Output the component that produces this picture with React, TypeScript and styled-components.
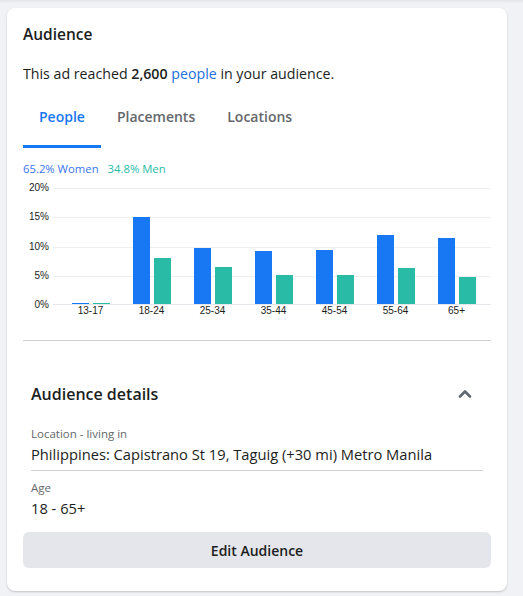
import * as React from 'react';
import styled, { createGlobalStyle } from 'styled-components';

const GlobalStyle = createGlobalStyle`
    html, body {
        margin: 0;
        padding: 0;
        background: linear-gradient(#e2e4e8 0, #f0f2f5 3px) #f0f2f5;
        font-family: 'Open Sans', 'Noto Sans', Arial, sans-serif;
        color: #1c1e21;
    }
`;

const Page = styled.div`
    padding: 8px 16px 5px 7px;
`;

const Card = styled.div`
    width: 500px;
    box-sizing: border-box;
    background: #fff;
    border-radius: 8px;
    box-shadow: 0 1px 2px rgba(0, 0, 0, 0.2);
    padding: 16px 16px 23px;
`;

const Title = styled.h2`
    margin: 0;
    font-size: 15.5px;
    line-height: 20px;
    font-weight: 600;
`;

const Reach = styled.p`
    margin: 20px 0 0;
    font-size: 14.2px;
    line-height: 20px;

    & b {
        font-weight: 600;
    }

    & a {
        color: #216fdb;
        text-decoration: none;
    }
`;

const Tabs = styled.div`
    display: flex;
    margin-top: 4px;
`;

const Tab = styled.div<{ $active?: boolean }>`
    padding: 19px 16px 18px;
    font-size: 14px;
    line-height: 20px;
    font-weight: 600;
    color: ${(p) => (p.$active ? '#1877f2' : '#65676b')};
    border-bottom: 3px solid ${(p) => (p.$active ? '#1877f2' : 'transparent')};
`;

const Legend = styled.div`
    display: flex;
    gap: 9px;
    margin-top: 13px;
    font-size: 11.3px;
    line-height: 16px;
`;

const LegendItem = styled.span<{ $color: string }>`
    color: ${(p) => p.$color};
`;

const Chart = styled.div`
    display: flex;
    gap: 4px;
    margin-top: 11px;
`;

const Axis = styled.div`
    width: 26px;
    height: 129px;
    margin-top: -6px;
    display: flex;
    flex-direction: column;
    justify-content: space-between;
    align-items: flex-end;
    font-family: 'Liberation Sans', Arial, sans-serif;
    font-size: 10px;
    line-height: 12px;
`;

const PlotColumn = styled.div`
    flex: 1;
`;

const Plot = styled.div`
    height: 117px;
    box-sizing: border-box;
    padding-left: 7px;
    display: flex;
    align-items: flex-end;
    border-bottom: 1px solid #e4e6eb;
    background: repeating-linear-gradient(
        to bottom,
        #eeeff1 0,
        #eeeff1 1px,
        transparent 1px,
        transparent 29.25px
    );
`;

const Group = styled.div`
    width: 61px;
    height: 100%;
    display: flex;
    justify-content: center;
    align-items: flex-end;
    gap: 4px;
`;

const Bar = styled.div<{ $color: string }>`
    width: 17px;
    min-height: 1px;
    background: ${(p) => p.$color};
`;

const Labels = styled.div`
    display: flex;
    padding-left: 7px;
`;

const Label = styled.div`
    width: 61px;
    text-align: center;
    font-family: 'Liberation Sans', Arial, sans-serif;
    font-size: 10px;
    line-height: 12px;
`;

const Divider = styled.hr`
    margin: 23px 0 0;
    border: 0;
    border-top: 1px solid #ced0d4;
`;

const Details = styled.div`
    padding: 41px 8px 0;
`;

const DetailsHeader = styled.div`
    display: flex;
    align-items: center;
    justify-content: space-between;
    padding-right: 10px;
`;

const DetailsTitle = styled.h3`
    margin: 0;
    font-size: 16px;
    line-height: 24px;
    font-weight: 600;
`;

const Field = styled.div<{ $first?: boolean }>`
    margin-top: ${(p) => (p.$first ? '20px' : '9px')};
`;

const FieldLabel = styled.div`
    font-size: 11.5px;
    line-height: 16px;
    color: #65676b;
`;

const FieldValue = styled.div<{ $ruled?: boolean }>`
    margin-top: 2px;
    font-size: 14.7px;
    line-height: 20px;
    padding-bottom: ${(p) => (p.$ruled ? '6px' : '0')};
    border-bottom: ${(p) => (p.$ruled ? '1px solid #ced0d4' : '0')};
`;

const Button = styled.button`
    display: block;
    width: 100%;
    height: 36px;
    margin-top: 14px;
    border: 0;
    border-radius: 6px;
    background: #e4e6eb;
    color: #1c1e21;
    font-family: inherit;
    font-size: 14px;
    font-weight: 600;
`;

const BLUE = '#1877f2';
const TEAL = '#2abba7';

const data = [
    { age: '13-17', women: 0.1, men: 0.1 },
    { age: '18-24', women: 14.8, men: 7.9 },
    { age: '25-34', women: 9.6, men: 6.3 },
    { age: '35-44', women: 9.1, men: 5.0 },
    { age: '45-54', women: 9.2, men: 5.0 },
    { age: '55-64', women: 11.8, men: 6.2 },
    { age: '65+', women: 11.3, men: 4.6 },
];

const pct = (v: number) => `${(v / 20) * 117}px`;

const Chevron = () => (
    <svg width="16" height="16" viewBox="0 0 16 16">
        <polyline
            points="3,10.5 8,5.5 13,10.5"
            fill="none"
            stroke="#606770"
            strokeWidth="2.6"
            strokeLinecap="round"
            strokeLinejoin="round"
        />
    </svg>
);

const App = () => (
    <Page>
        <GlobalStyle />
        <Card>
            <Title>Audience</Title>
            <Reach>
                This ad reached <b>2,600</b> <a href="#">people</a> in your audience.
            </Reach>
            <Tabs>
                <Tab $active>People</Tab>
                <Tab>Placements</Tab>
                <Tab>Locations</Tab>
            </Tabs>
            <Legend>
                <LegendItem $color="#3b74ec">65.2% Women</LegendItem>
                <LegendItem $color={TEAL}>34.8% Men</LegendItem>
            </Legend>
            <Chart>
                <Axis>
                    <span>20%</span>
                    <span>15%</span>
                    <span>10%</span>
                    <span>5%</span>
                    <span>0%</span>
                </Axis>
                <PlotColumn>
                    <Plot>
                        {data.map((d) => (
                            <Group key={d.age}>
                                <Bar $color={BLUE} style={{ height: pct(d.women) }} />
                                <Bar $color={TEAL} style={{ height: pct(d.men) }} />
                            </Group>
                        ))}
                    </Plot>
                    <Labels>
                        {data.map((d) => (
                            <Label key={d.age}>{d.age}</Label>
                        ))}
                    </Labels>
                </PlotColumn>
            </Chart>
            <Divider />
            <Details>
                <DetailsHeader>
                    <DetailsTitle>Audience details</DetailsTitle>
                    <Chevron />
                </DetailsHeader>
                <Field $first>
                    <FieldLabel>Location - living in</FieldLabel>
                    <FieldValue $ruled>Philippines: Capistrano St 19, Taguig (+30 mi) Metro Manila</FieldValue>
                </Field>
                <Field>
                    <FieldLabel>Age</FieldLabel>
                    <FieldValue>18 - 65+</FieldValue>
                </Field>
            </Details>
            <Button>Edit Audience</Button>
        </Card>
    </Page>
);

export default App;
